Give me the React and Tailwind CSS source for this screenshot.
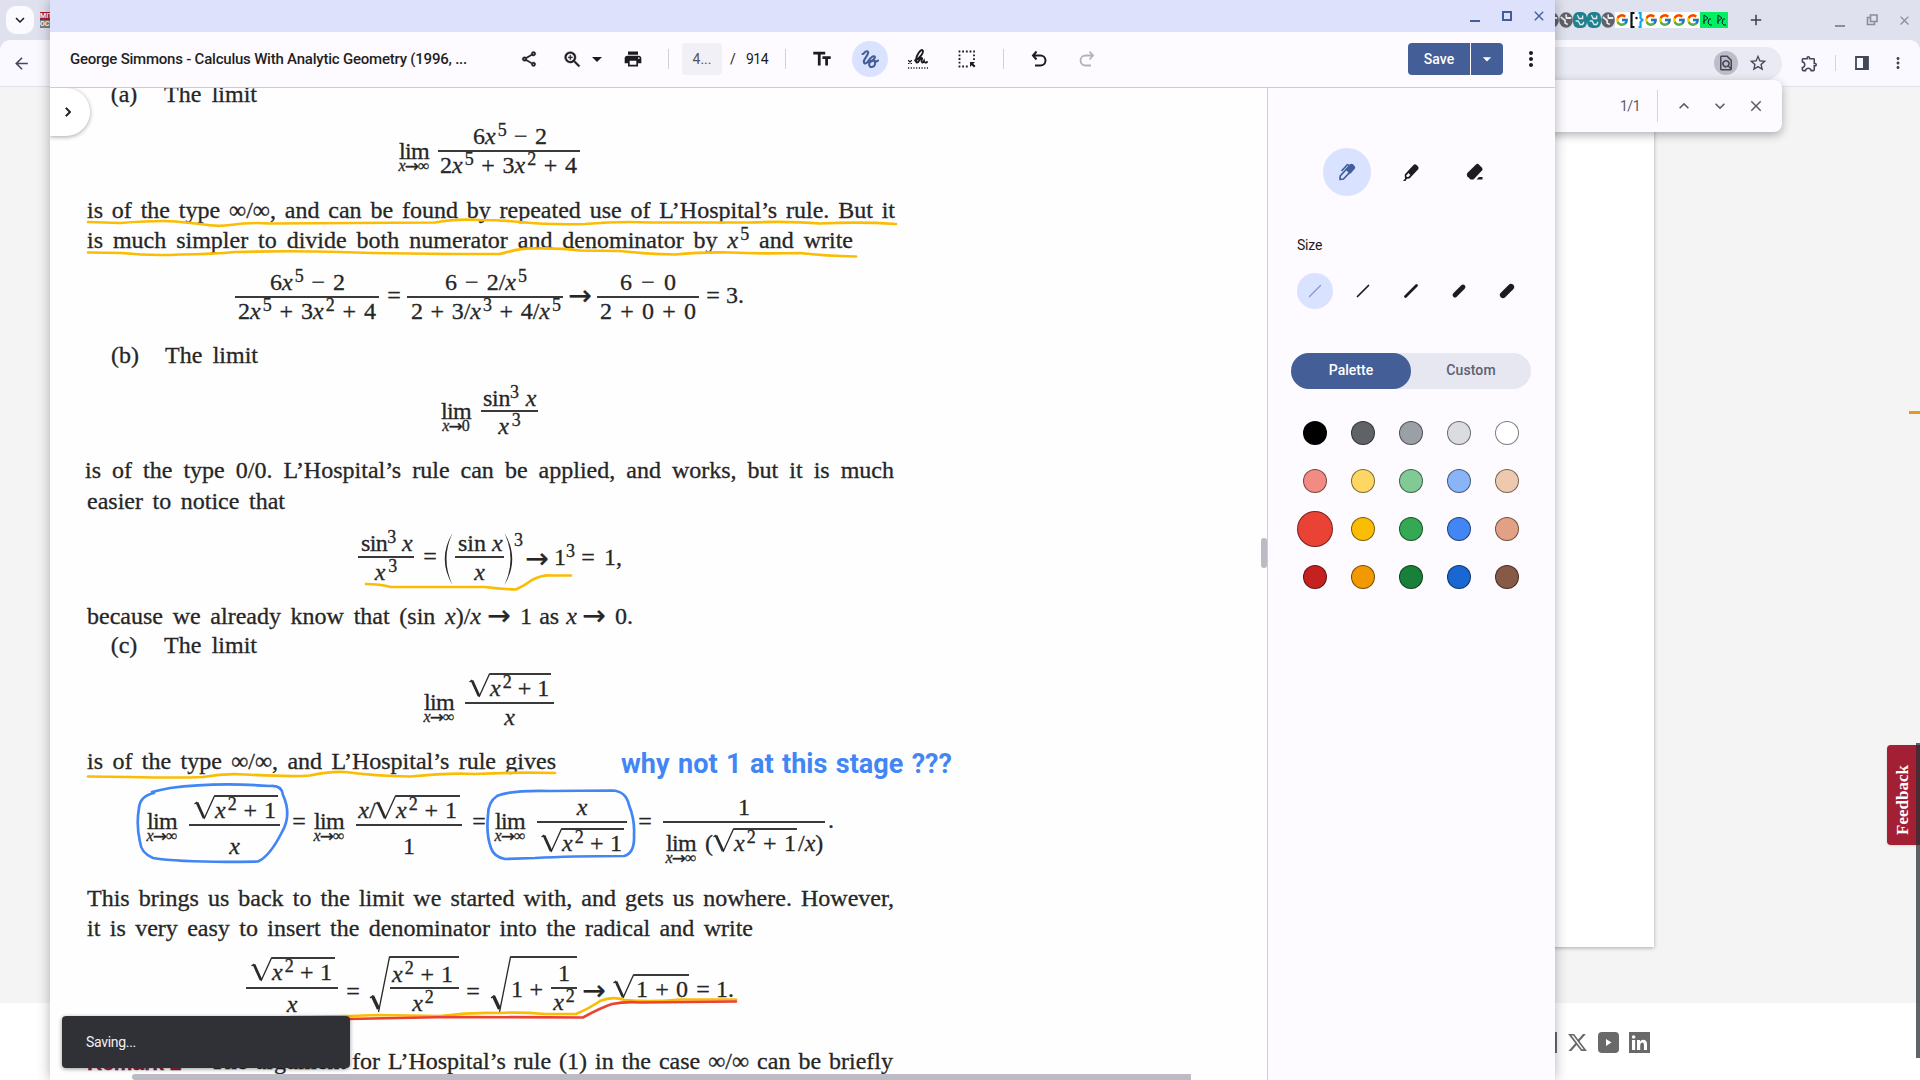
import React from "react";
import {
  MdOutlineShare, MdZoomIn, MdPrint, MdArrowDropDown, MdTextFields, MdMoreVert, MdOutlineFindInPage,
  MdStarOutline, MdOutlineExtension, MdKeyboardArrowUp, MdKeyboardArrowDown, MdClose, MdAdd, MdArrowBack,
} from "react-icons/md";
import { FcGoogle } from "react-icons/fc";
import { FaXTwitter } from "react-icons/fa6";

/* ---------- typeset math helpers ---------- */
const T = ({ c = "", children }) => (
  <div className={"h-6 shrink-0 whitespace-nowrap text-justify leading-6 [text-align-last:justify] " + c}>{children}</div>
);
const C = ({ c = "", children }) => (
  <div className={"h-6 shrink-0 whitespace-nowrap text-center leading-6 " + c}>{children}</div>
);
const X = () => <i>x</i>;
const S = ({ c = "ml-[2px]", children }) => (
  <span className={"relative -top-[8px] text-[18px] leading-none " + c}>{children}</span>
);
const Bar = ({ c = "mt-[2px] mb-[1px]" }) => <div className={"h-[2px] bg-[#3a3a3a] " + c} />;
const Row = ({ c = "", children }) => <div className={"flex shrink-0 items-start " + c}>{children}</div>;
const Lim = ({ c = "", to = "∞" }) => (
  <div className={"flex w-[36px] shrink-0 flex-col items-center " + c}>
    <div className="h-6 leading-6 tracking-[-0.6px]">lim</div>
    <div className="-mt-[5px] flex h-4 whitespace-nowrap text-[16px] leading-4">
      <i>x</i>
      <span className="-mx-px font-['DejaVu_Sans',sans-serif] text-[17px]">→</span>
      <span>{to}</span>
    </div>
  </div>
);
const Eq = ({ c }) => <C c={"w-[14px] " + c}>=</C>;
const Arrow = ({ c = "" }) => (
  <div className={"flex h-6 w-[24px] shrink-0 justify-center font-['DejaVu_Sans',sans-serif] text-[28px] leading-6 " + c}>→</div>
);
const Sqrt = ({ c = "", w, children }) => (
  <div className={"-mt-[3px] flex shrink-0 items-start " + c}>
    <svg className="h-[25px] w-[21px] shrink-0 overflow-visible" viewBox="0 0 21 25" fill="none" stroke="#2a2a2a">
      <path d="M0.500 9 L3 7" strokeWidth="1.2" />
      <path d="M3 7.500 L10 23" strokeWidth="2.8" />
      <path d="M10 24 L20.500 1 H22" strokeWidth="1.3" />
    </svg>
    <div className={"border-t-2 border-[#3a3a3a] pt-[1px] " + w}>{children}</div>
  </div>
);
const BigSqrt = ({ c = "", w, children }) => (
  <div className={"flex shrink-0 items-start " + c}>
    <svg className="h-[56px] w-[20px] shrink-0 overflow-visible" viewBox="0 0 20 56" fill="none" stroke="#2a2a2a">
      <path d="M0 42 L3 39.500" strokeWidth="1.2" />
      <path d="M2.500 40 L8.500 53" strokeWidth="3.4" />
      <path d="M8.500 56 L19.500 1 H21" strokeWidth="1.3" />
    </svg>
    <div className={"h-[56px] border-t-2 border-[#3a3a3a] " + w}>{children}</div>
  </div>
);

function Page() {
  return (
    <div className="-mt-[6px] flex flex-col pl-[37px] font-['Liberation_Serif',serif] text-[24px] text-[#262626] [-webkit-text-stroke:0.3px_#262626]">
      <Row c="h-[42px]">
        <C c="ml-[23px] w-[28px]">(a)</C>
        <T c="ml-[26px] w-[93px]">The limit</T>
      </Row>
      <Row c="h-[73px]">
        <Lim c="ml-[309px] mt-[15px]" />
        <div className="ml-[6px] w-[142px]">
          <T c="ml-[35px] w-[74px]">6<X /><S>5</S> − 2</T>
          <Bar />
          <T c="ml-[2px] w-[137px]">2<X /><S>5</S> + 3<X /><S>2</S> + 4</T>
        </div>
      </Row>
      <Row c="h-[30px]"><T c="mt-px w-[808px]">is of the type ∞/∞, and can be found by repeated use of L’Hospital’s rule. But it</T></Row>
      <Row c="h-[43px]"><T c="mt-px w-[766px]">is much simpler to divide both numerator and denominator by <span><X /><S>5</S></span> and write</T></Row>
      <Row c="h-[73px]">
        <div className="ml-[148px] w-[144px]">
          <T c="ml-[35px] w-[75px]">6<X /><S>5</S> − 2</T>
          <Bar />
          <T c="ml-[3px] w-[138px]">2<X /><S>5</S> + 3<X /><S>2</S> + 4</T>
        </div>
        <Eq c="ml-[8px] mt-[13px]" />
        <div className="ml-[6px] w-[156px]">
          <T c="ml-[38px] w-[82px]">6 − 2/<X /><S>5</S></T>
          <Bar />
          <T c="ml-[4px] w-[150px]">2 + 3/<X /><S>3</S> + 4/<X /><S>5</S></T>
        </div>
        <Arrow c="ml-[5px] mt-[14px]" />
        <div className="ml-[5px] w-[102px]">
          <T c="ml-[23px] w-[56px]">6 − 0</T>
          <Bar />
          <T c="ml-[3px] w-[96px]">2 + 0 + 0</T>
        </div>
        <Eq c="ml-[7px] mt-[13px]" />
        <C c="ml-[5px] mt-[13px] w-[20px]">3.</C>
      </Row>
      <Row c="h-[43px]">
        <C c="ml-[23px] w-[30px]">(b)</C>
        <T c="ml-[25px] w-[93px]">The limit</T>
      </Row>
      <Row c="h-[72px]">
        <Lim c="ml-[351px] mt-[13px]" to="0" />
        <div className="ml-[7px] w-[57px]">
          <T c="ml-[2px] w-[53px] tracking-[-0.3px]">sin<S c="">3</S> <X /></T>
          <Bar c="mb-[2px]" />
          <C c="w-full"><X /><S c="ml-[3px]">3</S></C>
        </div>
      </Row>
      <Row c="h-[31px]"><T c="-ml-[2px] w-[809px]">is of the type 0/0. L’Hospital’s rule can be applied, and works, but it is much</T></Row>
      <Row c="h-[42px]"><T c="w-[198px]">easier to notice that</T></Row>
      <Row c="h-[72px]">
        <div className="ml-[271px] w-[56px]">
          <T c="ml-[3px] w-[51px] tracking-[-0.6px]">sin<S c="">3</S> <X /></T>
          <Bar c="mt-[1px] mb-[2px]" />
          <C c="w-full"><X /><S c="ml-[3px]">3</S></C>
        </div>
        <Eq c="ml-[9px] mt-[13px]" />
        <svg className="ml-[7px] mt-[2px] h-[52px] w-[9px]" viewBox="0 0 9 52" fill="#2a2a2a"><path d="M8.500 0 Q-7 26 8.500 52 Q-3.500 26 8.500 0" /></svg>
        <div className="ml-[2px] w-[49px]">
          <T c="ml-[3px] w-[44px]">sin <X /></T>
          <Bar c="mt-[1px] mb-[2px]" />
          <C c="w-full"><X /></C>
        </div>
        <svg className="mt-[2px] h-[52px] w-[9px]" viewBox="0 0 9 52" fill="#2a2a2a"><path d="M0.500 0 Q16 26 0.500 52 Q12.500 26 0.500 0" /></svg>
        <div className="-mt-[3px] ml-px w-[8px] text-[18px] leading-6">3</div>
        <Arrow c="ml-[3px] mt-[16px]" />
        <C c="ml-[4px] mt-[14px] w-[23px]">1<S c="">3</S></C>
        <Eq c="ml-[5px] mt-[14px]" />
        <C c="ml-[7px] mt-[14px] w-[22px]">1,</C>
      </Row>
      <Row c="h-[30px] pt-px">
        <T c="w-[394px]">because we already know that (sin <X />)/<X /></T>
        <Arrow c="ml-[6px]" />
        <T c="ml-[9px] w-[57px]">1 as <X /></T>
        <Arrow c="ml-[5px]" />
        <C c="ml-[9px] w-[18px]">0.</C>
      </Row>
      <Row c="h-[41px]">
        <C c="ml-[23px] w-[28px]">(c)</C>
        <T c="ml-[26px] w-[93px]">The limit</T>
      </Row>
      <Row c="h-[75px]">
        <Lim c="ml-[334px] mt-[16px]" />
        <div className="ml-[8px] w-[89px] pt-[2px]">
          <Sqrt c="ml-[4px]" w="w-[61px]"><T c="w-[59px]"><X /><S>2</S> + 1</T></Sqrt>
          <Bar />
          <C c="w-full"><X /></C>
        </div>
      </Row>
      <Row c="h-[46px]"><T c="w-[469px]">is of the type ∞/∞, and L’Hospital’s rule gives</T></Row>
      <Row c="h-[91px]">
        <Lim c="ml-[57px] mt-[14px]" />
        <div className="ml-[9px] mt-[3px] w-[91px]">
          <Sqrt c="ml-[5px]" w="w-[63px]"><T c="w-[61px]"><X /><S>2</S> + 1</T></Sqrt>
          <Bar c="mt-[2px] mb-[8px]" />
          <C c="w-full"><X /></C>
        </div>
        <Eq c="ml-[12px] mt-[14px]" />
        <Lim c="ml-[5px] mt-[14px]" />
        <div className="ml-[9px] mt-[3px] w-[106px]">
          <div className="flex">
            <C c="ml-[2px] w-[18px]"><X />/</C>
            <Sqrt c="-ml-px" w="w-[64px]"><T c="w-[61px]"><X /><S>2</S> + 1</T></Sqrt>
          </div>
          <Bar c="mt-[2px] mb-[8px]" />
          <C c="w-full">1</C>
        </div>
        <Eq c="ml-[10px] mt-[14px]" />
        <Lim c="ml-[6px] mt-[14px]" />
        <div className="ml-[9px] w-[90px]">
          <C c="w-full"><X /></C>
          <Bar c="mt-[2px] mb-[8px]" />
          <Sqrt c="ml-[4px]" w="w-[62px]"><T c="w-[60px]"><X /><S>2</S> + 1</T></Sqrt>
        </div>
        <Eq c="ml-[11px] mt-[14px]" />
        <div className="ml-[11px] w-[162px]">
          <C c="w-full">1</C>
          <Bar c="mt-[2px] mb-[8px]" />
          <div className="flex">
            <Lim />
            <C c="ml-[6px] w-[8px]">(</C>
            <Sqrt w="w-[63px]"><T c="w-[62px]"><X /><S>2</S> + 1</T></Sqrt>
            <T c="ml-[1px] w-[26px]">/<X />)</T>
          </div>
        </div>
        <C c="ml-[3px] mt-[13px] w-[6px]">.</C>
      </Row>
      <Row c="h-[30px]"><T c="w-[807px]">This brings us back to the limit we started with, and gets us nowhere. However,</T></Row>
      <Row c="h-[40px]"><T c="w-[666px]">it is very easy to insert the denominator into the radical and write</T></Row>
      <Row c="h-[93px]">
        <div className="ml-[159px] mt-[4px] w-[92px]">
          <Sqrt c="ml-[5px]" w="w-[63px]"><T c="w-[60px]"><X /><S>2</S> + 1</T></Sqrt>
          <Bar c="mt-[3px] mb-[3px]" />
          <C c="w-full"><X /></C>
        </div>
        <Eq c="ml-[8px] mt-[23px]" />
        <BigSqrt c="ml-[10px]" w="w-[69px]">
          <T c="ml-[2px] mt-[4px] w-[61px]"><X /><S>2</S> + 1</T>
          <Bar c="mt-[1px] mb-[2px]" />
          <C c="w-[66px]"><X /><S>2</S></C>
        </BigSqrt>
        <Eq c="ml-[7px] mt-[23px]" />
        <BigSqrt c="ml-[11px]" w="w-[66px]">
          <div className="flex">
            <T c="mt-[19px] w-[32px]">1 +</T>
            <div className="ml-[8px] mt-[3px] w-[26px]">
              <C c="w-full">1</C>
              <Bar c="mt-[2px] mb-[1px]" />
              <C c="w-full"><X /><S>2</S></C>
            </div>
          </div>
        </BigSqrt>
        <Arrow c="ml-[5px] mt-[23px]" />
        <Sqrt c="ml-[7px] mt-[18px]" w="w-[55px]"><T c="ml-[2px] w-[52px]">1 + 0</T></Sqrt>
        <Eq c="ml-[7px] mt-[21px]" />
        <C c="ml-[5px] mt-[21px] w-[20px]">1.</C>
      </Row>
      <Row c="h-[31px]">
        <T c="mt-[2px] w-[93px] font-['Liberation_Sans',sans-serif] text-[21px] font-bold text-[#a3203f]">Remark 2</T>
        <T c="ml-[30px] w-[136px]">The argument</T>
        <T c="ml-[6px] w-[541px]">for L’Hospital’s rule (1) in the case ∞/∞ can be briefly</T>
      </Row>
    </div>
  );
}

/* Pen strokes, in screen coordinates */
function Ink() {
  return (
    <svg className="pointer-events-none absolute inset-0 h-[992px] w-[1217px]" viewBox="50 88 1217 992" fill="none" strokeWidth="2.7" strokeLinecap="round" strokeLinejoin="round">
      <g stroke="#fbbc04">
        <path d="M88 222 L120 223 Q160 220 176 221.500 Q190 223 200 224 Q217 227 230 225 Q250 222 270 223.500 L435 222.500 Q455 218.500 480 220 Q500 220 520 222 Q550 225 585 224 Q620 221 650 222.500 L750 222.500 Q790 221 820 223.500 Q860 221.500 896 224" />
        <path d="M88 252.500 L122 253 Q150 256 180 254.500 Q215 254 235 252 Q290 250.500 340 252 Q400 254 500 254 Q520 248 535 248.500 Q560 248 580 250.500 L620 251 Q645 254 675 254.500 Q700 252 730 252.500 Q760 254 800 253 Q825 256 856 256.500" />
        <path d="M366 584 Q380 584 391 587 L485 587 Q500 589 516 589.500 Q524 586 532 580 Q542 575 550 575.500 L571 575.500" />
        <path d="M88 776.500 L130 777 Q180 778 203 777 Q225 773 245 774.500 Q290 777 310 775.500 Q330 771 345 772 Q375 776 410 776.500 Q450 772.500 475 774 Q515 772 555 773" />
        <path d="M290 1017 Q320 1016.500 350 1016 L378 1015 L440 1016 Q470 1012 500 1013 Q520 1012 545 1014 L576 1014 Q590 1008 600 1001 Q612 996 625 1000 Q650 1002.500 680 999.500 L736 999.500" />
      </g>
      <path stroke="#ea4335" d="M348 1019 Q400 1018 450 1017 L583 1017.500 Q600 1008 612 1004 Q625 1001.500 640 1002.500 L736 1001.500" />
      <g stroke="#4285f4">
        <path d="M154 793 Q140 796 139 808 Q136 825 140 842 Q141 853 153 858 Q185 863 258 861.500 Q270 856 282 832 Q292 815 283 795 Q282 785 270 786 Q215 782 170 788 Q160 790 152 792" />
        <path d="M497 796 Q488 802 488 815 Q486 835 491 848 Q494 857 505 859 L535 858 Q570 856 624 856 Q635 853 634 835 Q635 820 629 805 Q626 791 612 790.500 L550 791 Q510 790 497 796" />
      </g>
    </svg>
  );
}

const Sep = () => <div className="h-5 w-px bg-[#d0d0d8]" />;

function Toolbar() {
  return (
    <div className="flex h-[56px] shrink-0 items-center border-b border-[#cdcdd3] bg-[#fdfbff] pb-px pl-5 text-[#1b1b21]">
      <div className="w-[398px] whitespace-nowrap text-[15px] font-medium tracking-[-0.22px] text-[#1f1f24]">George Simmons - Calculus With Analytic Geometry (1996, ...</div>
      <div className="ml-[51px] flex w-5 justify-center"><MdOutlineShare className="size-[18px] shrink-0 [&>path[fill=none]]:hidden" stroke="currentColor" strokeWidth="0.5" /></div>
      <div className="ml-[22px] flex w-[22px] justify-center"><MdZoomIn className="size-[21px] shrink-0 [&>path[fill=none]]:hidden" stroke="currentColor" strokeWidth="0.5" /></div>
      <MdArrowDropDown className="ml-[2px] size-6 shrink-0" />
      <MdPrint className="ml-[14px] size-5 shrink-0" />
      <div className="ml-[25px]"><Sep /></div>
      <div className="ml-[13px] flex h-8 w-10 items-center justify-center rounded bg-[#f0f0f6] text-[14px] text-[#55555c]">4...</div>
      <div className="ml-2 w-[5px] text-[14px]">/</div>
      <div className="ml-[11px] w-6 text-[14px] tracking-[-0.5px]">914</div>
      <div className="ml-[15px]"><Sep /></div>
      <MdTextFields className="ml-[25px] size-[22px] shrink-0" />
      <div className="ml-[19px] flex size-9 items-center justify-center rounded-full bg-[#d9e2ff]">
        <svg className="size-6" viewBox="0 0 24 24" fill="none" stroke="#445e97" strokeWidth="2.1" strokeLinecap="round" strokeLinejoin="round">
          <path d="M4.500 7 C6 7.500 6.500 4 9 4.200 C12 4.800 8.500 9 6.500 12.500 C4.800 16 7 18 9.500 15 C11.500 12.500 13.500 8.700 16 9.300 C18.500 10 15.500 12.500 13.500 14.500 M20 13.500 C18.500 16 17.500 12.800 14 13.500 C10 15 10.500 20.500 14 20 C17.500 19.500 18 15.500 16 13.800" />
        </svg>
      </div>
      <svg className="ml-[18px] h-6 w-6 shrink-0" viewBox="0 0 24 24" fill="none" stroke="#1b1b21" strokeLinecap="round">
        <path d="M2.500 13.500 L5.500 16.500 M5.500 13.500 L2.500 16.500" strokeWidth="1.1" />
        <path d="M9 13.500 C13 12 18 6 16.700 3.500 C15 1.200 10.500 8 10 12.500 C9.600 17 12 16 13.500 13 C14.500 10.500 17 10 15.700 13 C15 16 17 16.500 18 14 C18.500 16 20 16 21 15" strokeWidth="1.9" />
        <path d="M2 21 H22" strokeWidth="1.3" strokeDasharray="1.2 1.500" strokeLinecap="butt" />
      </svg>
      <svg className="ml-[25px] h-6 w-6 shrink-0" viewBox="0 0 24 24" fill="none" stroke="#1b1b21">
        <path d="M19 13 V4.500 H4.500 V19.500 H13" strokeWidth="1.8" strokeDasharray="1.8 1.900" />
        <path d="M15 15 H20 L18.300 16.700 L20.500 19 L19 20.500 L16.700 18.300 L15 20 Z" fill="#1b1b21" stroke="none" />
      </svg>
      <div className="ml-[24px]"><Sep /></div>
      <svg className="ml-[25px] size-5 shrink-0" viewBox="0 0 20 20" fill="none" stroke="#1b1b21" strokeWidth="2"><path d="M7.500 2.500 L4 6.500 L7.500 10.500 M4 6.500 H11.500 A4.800 4.800 0 0 1 11.500 16.500 H6" /></svg>
      <svg className="ml-[28px] size-5 shrink-0" viewBox="0 0 20 20" fill="none" stroke="#b3b2ba" strokeWidth="1.8"><path d="M12.500 2.500 L16 6.500 L12.500 10.500 M16 6.500 H8.500 A4.800 4.800 0 0 0 8.500 16.500 H14" /></svg>
      <div className="ml-auto flex h-8 text-white">
        <div className="flex w-[62px] items-center justify-center rounded-l bg-[#445e97] text-[14px] font-medium">Save</div>
        <div className="ml-px flex w-8 items-center justify-center rounded-r bg-[#445e97]"><MdArrowDropDown className="size-5" /></div>
      </div>
      <MdMoreVert className="ml-4 mr-3 size-6 shrink-0" />
    </div>
  );
}

const swatches = [
  ["#000000", "#5f6368", "#9aa0a6", "#dadce0", "#ffffff"],
  ["#f28b82", "#fdd663", "#81c995", "#8ab4f8", "#eec9ae"],
  ["#ea4335", "#fbbc04", "#34a853", "#4285f4", "#e2a185"],
  ["#c5221f", "#f29900", "#188038", "#1967d2", "#885945"],
];

function Sidebar() {
  return (
    <div className="flex w-[288px] shrink-0 flex-col border-l border-[#cdcdd3] bg-[#fdfbff] text-[#1b1b21]">
      <div className="ml-[55px] mt-[60px] flex h-12 items-center">
        <div className="flex size-12 items-center justify-center rounded-full bg-[#d9e2ff]">
          <svg className="size-5" viewBox="0 0 20 20" fill="none" stroke="#445e97" strokeWidth="1.7" strokeLinejoin="round">
            <path d="M3 17.500 L3.200 14 L11.500 5 L14.800 8.200 L6.500 17 Z" />
            <path d="M9.500 7.500 L13.500 3 Q14.500 2.200 15.500 3 L17 4.500 Q17.800 5.500 17 6.500 L13 10.800 Z" fill="#445e97" />
            <path d="M4.500 9 L10.500 2.700 L12.500 3.200" />
          </svg>
        </div>
        <svg className="ml-[30px] size-5" viewBox="0 0 20 20">
          <path d="M2 19 L4 16.800 L3.700 12.500 L12.500 3 Q14 1.500 15.800 3.200 L17 4.400 Q18.300 6 17 7.500 L8.500 16.500 L5.800 16.800 L4.500 19 Z" fill="#1b1b21" />
          <path d="M5.500 13.300 L7.500 11 L9.300 12.900 L7.300 15 L5.700 15 Z" fill="#fdfbff" />
        </svg>
        <svg className="ml-[44px] size-5" viewBox="0 0 20 20" fill="#1b1b21">
          <path d="M2.300 11 L11 2.500 Q12.400 1.200 13.800 2.500 L17 5.800 Q18.200 7.200 17 8.500 L8.500 17.500 H5.500 L2.300 14.200 Q1.200 12.500 2.300 11 Z" />
          <path d="M11.500 17.500 L14 15 H17.500 V17.500 Z" />
        </svg>
      </div>
      <div className="ml-[29px] mt-[39px] h-5 text-[14px] leading-5 tracking-[-0.2px]">Size</div>
      <div className="ml-[29px] mt-[18px] flex gap-3">
        {[1.2, 1.7, 2.8, 4.8, 6.2].map((w, i) => (
          <div key={w} className={"flex size-9 items-center justify-center rounded-full " + (i === 0 ? "bg-[#d9e2ff]" : "")}>
            <svg className="size-4 overflow-visible" viewBox="0 0 16 16">
              <path d={i < 3 ? "M2.500 13.500 L13.500 2.500" : "M4 12 L12 4"} stroke={i === 0 ? "#7f97cb" : "#1b1b21"} strokeWidth={w} strokeLinecap="round" />
            </svg>
          </div>
        ))}
      </div>
      <div className="ml-[23px] mt-[44px] flex h-9 w-[240px] rounded-full bg-[#e6e7f0] text-[14px] font-medium leading-[35px]">
        <div className="w-[120px] rounded-full bg-[#445e97] text-center text-white">Palette</div>
        <div className="w-[120px] text-center tracking-[0.1px] text-[#5b6072]">Custom</div>
      </div>
      <div className="ml-[23px] mt-[20px] grid w-[240px] grid-cols-5">
        {swatches.flat().map((color) => (
          <div key={color} className="flex size-12 items-center justify-center">
            <div className={"rounded-full border border-black/50 " + (color === "#ea4335" ? "size-9" : "size-6")} style={{ backgroundColor: color }} />
          </div>
        ))}
      </div>
    </div>
  );
}

const Globe = ({ c }) => (
  <svg className="h-4 w-[14px]" viewBox="0 0 16 16" preserveAspectRatio="none">
    <circle cx="8" cy="8" r="7.800" fill={c} />
    <path d="M2 5 L7 8.500 V11 L10 12.500 M8 2.500 L8.500 6 H14" stroke="#e8eaee" strokeWidth="1.900" fill="none" />
  </svg>
);
const Pretzel = () => (
  <svg className="h-4 w-[14px]" viewBox="0 0 16 16" preserveAspectRatio="none">
    <rect width="16" height="16" rx="6" fill="#20808d" />
    <path d="M5 3 L7 6.500 H11 V3.500 M3 9 H6 L8 12.500 H11 L12.500 10" stroke="#d9eef0" strokeWidth="1.500" fill="none" />
  </svg>
);
const Dc = () => (
  <svg className="h-4 w-[14px] bg-[#03ef62]" viewBox="0 0 14 16" fill="none" stroke="#05192d" strokeWidth="1">
    <path d="M4 3 V12 M4 3 L8 6 L3 10 M11 7 H9 L8 11 L10 13 H12" />
  </svg>
);
const G = () => <FcGoogle className="h-4 w-[14px] bg-white" />;

function Browser() {
  return (
    <div className="flex h-[1080px] w-[1920px] flex-col bg-[#dfe1ee]">
      <div className="flex h-10 shrink-0 items-center">
        <div className="ml-[6px] flex size-7 items-center justify-center rounded-[10px] bg-[#fbfbff]"><MdKeyboardArrowDown className="size-[18px] text-[#1b1b21]" /></div>
        <div className="ml-[6px] flex h-4 w-4 flex-col overflow-hidden text-[7px] font-bold leading-[8px] text-white">
          <div className="h-2 bg-[#b31b2c]">MIT</div>
          <div className="h-2 bg-[#807f78]">OCW</div>
        </div>
        <div className="ml-[1489px] flex h-4 w-[183px]">
          <Globe c="#5f6368" /><Globe c="#5f6368" /><Pretzel /><Pretzel /><Globe c="#5f6368" /><G />
          <svg className="h-4 w-[15px] bg-white" viewBox="0 0 14 16" fill="none" strokeWidth="2.200"><path d="M5 1 H2 V15 H5" stroke="#111" /><path d="M9 1 H11 V6 L13 8 L11 10 V15 H9" stroke="#0ea5f0" /><circle cx="7" cy="6" r="0.600" stroke="#111" strokeWidth="1.200" /></svg>
          <G /><G /><G /><G /><Dc /><Dc />
        </div>
        <MdAdd className="ml-[19px] size-[18px] text-[#3c3e4a]" />
        <div className="ml-[70px] mt-3 h-[2px] w-[10px] bg-[#8b8d98]" />
        <svg className="ml-[20px] size-[14px]" viewBox="0 0 14 14" fill="none" stroke="#8b8d98" strokeWidth="1.600"><path d="M5.500 2 H12 V8.500 H5.500 Z M5.500 4.500 H2.500 V11.500 H9.500 V9" /></svg>
        <MdClose className="ml-[18px] size-[15px] text-[#8b8d98]" />
      </div>
      <div className="flex h-[47px] shrink-0 items-center rounded-t-[10px] border-b border-[#dfe1ee] bg-[#f9f9ff] text-[#44475a]">
        <MdArrowBack className="ml-3 size-[19px] shrink-0" />
        <div className="ml-[60px] flex h-[33px] w-[1691px] items-center justify-end rounded-full bg-[#e9eaf3]">
          <div className="flex size-6 items-center justify-center rounded-full bg-[#bcbdc6]"><MdOutlineFindInPage className="size-[18px]" /></div>
          <MdStarOutline className="ml-[10px] mr-[14px] size-5" />
        </div>
        <MdOutlineExtension className="ml-[18px] size-[19px]" />
        <div className="ml-[16px] h-4 w-px bg-[#c9d6fb]" />
        <svg className="ml-[18px] size-4" viewBox="0 0 16 16"><path d="M2 2 H14 V14 H2 Z" fill="none" stroke="#44475a" strokeWidth="1.800" /><path d="M9 2 H14 V14 H9 Z" fill="#44475a" /></svg>
        <MdMoreVert className="ml-[19px] size-[18px]" />
      </div>
      <div className="h-[916px] shrink-0 overflow-hidden bg-[#f4f4f4]">
        <div className="ml-[266px] h-[860px] w-[1388px] bg-white shadow-[0_1px_4px_rgba(0,0,0,0.3)]" />
      </div>
      <div className="flex h-[77px] shrink-0 items-center bg-white pl-[1536px] pt-[2px] text-[#696969]">
        <div className="size-[21px] border-2 border-[#696969]" />
        <FaXTwitter className="ml-[10px] size-[21px]" />
        <svg className="ml-[10px] size-[21px]" viewBox="0 0 21 21"><rect width="21" height="21" rx="4" fill="#696969" /><path d="M8 7 L13.500 10.500 L8 14 Z" fill="#fff" /></svg>
        <svg className="ml-[10px] size-[21px]" viewBox="0 0 21 21" fill="#fff"><path d="M0 0 H21 V21 H0 Z" fill="#696969" /><circle cx="4.600" cy="5" r="1.800" /><path d="M3 8 H6.200 V18 H3 Z M8 8 H11 V9.400 Q12.200 7.700 14.300 7.800 Q18 8 18 12 V18 H14.900 V12.800 Q14.900 10.400 13.200 10.400 Q11.200 10.400 11.200 13 V18 H8 Z" /></svg>
      </div>
    </div>
  );
}

export default function App() {
  return (
    <div className="relative h-[1080px] w-[1920px] overflow-hidden font-[Roboto,sans-serif]">
      <Browser />
      {/* find-in-page bubble */}
      <div className="absolute left-[1382px] top-[80px] flex h-[52px] w-[400px] items-center justify-end rounded-lg bg-[#fdfbff] pr-[17px] text-[#5c5d66] shadow-[0_3px_10px_rgba(0,0,0,0.3)]">
        <div className="text-[14px] tracking-[-0.5px]">1/1</div>
        <div className="ml-[17px] h-8 w-px bg-[#c9d6fb]" />
        <MdKeyboardArrowUp className="ml-[16px] size-5" />
        <MdKeyboardArrowDown className="ml-4 size-5" />
        <MdClose className="ml-[17px] size-[18px]" />
      </div>
      {/* feedback tab and page scrollbar */}
      <div className="absolute left-[1887px] top-[745px] flex h-[100px] w-[33px] items-center justify-center rounded-l-sm bg-[#a31f34] pr-[3px] shadow">
        <span className="rotate-180 pb-[9px] font-['Liberation_Serif',serif] text-[17px] font-bold leading-none text-white [writing-mode:vertical-rl]">Feedback</span>
      </div>
      <div className="absolute left-[1916px] top-[743px] h-[315px] w-1 bg-[#2c3034]/75" />
      <div className="absolute left-[1909px] top-[411px] h-[3px] w-[11px] bg-[#e39a1c]" />

      {/* viewer window */}
      <div className="absolute left-[50px] top-0 flex h-[1080px] w-[1505px] flex-col bg-[#fefefe] shadow-[0_0_12px_rgba(0,0,0,0.3)]">
        <div className="flex h-8 shrink-0 items-center justify-end bg-[#dde1fb] pr-2 text-[#445e97]">
          <div className="mt-[10px] h-[2px] w-[10px] bg-[#445e97]" />
          <div className="ml-[22px] size-[10px] border-2 border-[#445e97]" />
          <MdClose className="ml-[19px] size-4" />
        </div>
        <Toolbar />
        <div className="flex h-[992px] shrink-0">
          <div className="relative h-[992px] w-[1217px] overflow-hidden">
            <Page />
            <Ink />
            <div className="absolute left-[571px] top-[660px] w-[331px] whitespace-nowrap text-justify text-[27px] font-bold leading-8 text-[#4285f4] [text-align-last:justify]">why not 1 at this stage ???</div>
            <div className="absolute left-0 top-0 flex h-12 w-10 items-center rounded-r-full bg-white pl-[9px] shadow-[0_1px_4px_rgba(0,0,0,0.35)]">
              <MdKeyboardArrowDown className="size-[18px] -rotate-90 text-[#1b1b21] [&>path[fill=none]]:hidden" stroke="currentColor" strokeWidth="0.8" />
            </div>
            <div className="absolute left-[1211px] top-[450px] h-[30px] w-[6px] rounded-[3px] bg-[#bcbbc3]" />
            <div className="absolute left-[82px] top-[986px] h-[6px] w-[1059px] rounded-l-[3px] bg-[#bcbbc3]" />
            <div className="absolute left-[12px] top-[928px] flex h-[52px] w-[288px] items-center rounded bg-[#303136] pl-6 text-[14px] tracking-[-0.3px] text-[#f0eff5] shadow-[0_1px_4px_rgba(0,0,0,0.4)]">Saving...</div>
          </div>
          <Sidebar />
        </div>
      </div>
    </div>
  );
}
